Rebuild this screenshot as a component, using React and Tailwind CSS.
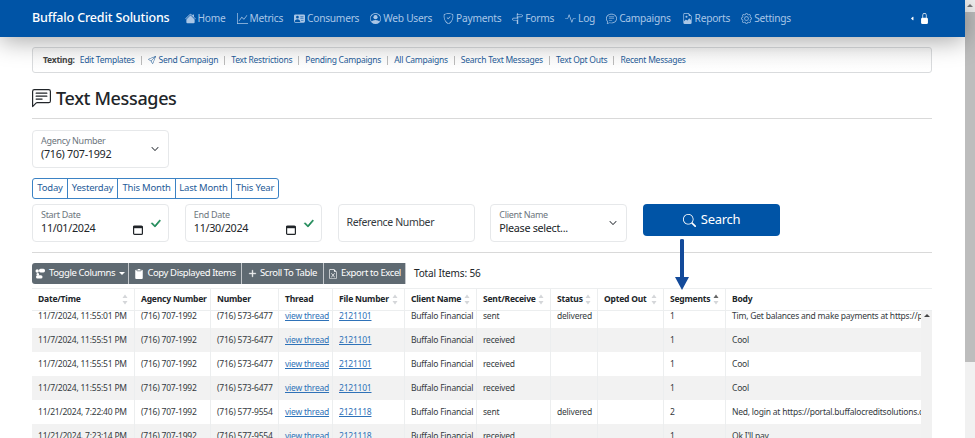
import React from "react";
import {
  BsHouseFill, BsGraphUp, BsPersonVcardFill, BsPersonCircle, BsShieldCheck, BsSignpostSplit,
  BsActivity, BsChatText, BsFileEarmarkImage, BsGear, BsCaretLeftFill, BsLockFill, BsSend,
  BsChatLeftText, BsChevronDown, BsCheckLg, BsSearch, BsClipboard2Fill,
  BsPlusLg, BsFileEarmarkExcel,
} from "react-icons/bs";

const font = { fontFamily: '"Noto Sans", "Open Sans", Arial, sans-serif' };

const nav = [
  [BsHouseFill, "Home"], [BsGraphUp, "Metrics"], [BsPersonVcardFill, "Consumers"], [BsPersonCircle, "Web Users"],
  [BsShieldCheck, "Payments"], [BsSignpostSplit, "Forms"], [BsActivity, "Log"], [BsChatText, "Campaigns"],
  [BsFileEarmarkImage, "Reports"], [BsGear, "Settings"],
];

const subnav = ["Edit Templates", "Send Campaign", "Text Restrictions", "Pending Campaigns", "All Campaigns", "Search Text Messages", "Text Opt Outs", "Recent Messages"];

const cols = [
  ["Date/Time", true, 103], ["Agency Number", false, 76], ["Number", false, 68], ["Thread", false, 54],
  ["File Number", true, 72], ["Client Name", true, 72], ["Sent/Receive", true, 74], ["Status", true, 47],
  ["Opted Out", true, 66], ["Segments", "up", 62], ["Body", false, 206],
];

const rows = [
  ["11/7/2024, 11:55:01 PM", "(716) 573-6477", "2121101", "sent", "delivered", "1", "Tim, Get balances and make payments at https://portal.buffalocreditsolutions.com"],
  ["11/7/2024, 11:55:51 PM", "(716) 573-6477", "2121101", "received", "", "1", "Cool"],
  ["11/7/2024, 11:55:51 PM", "(716) 573-6477", "2121101", "received", "", "1", "Cool"],
  ["11/7/2024, 11:55:51 PM", "(716) 573-6477", "2121101", "received", "", "1", "Cool"],
  ["11/21/2024, 7:22:40 PM", "(716) 577-9554", "2121118", "sent", "delivered", "2", "Ned, login at https://portal.buffalocreditsolutions.com/login"],
  ["11/21/2024, 7:23:14 PM", "(716) 577-9554", "2121118", "received", "", "1", "Ok I'll pay"],
];

function Sort({ up }) {
  return (
    <svg width="6" height="11" viewBox="0 0 6 11" className="shrink-0">
      <path d="M3 0.5 L5.5 4 H0.5 Z" fill={up ? "#666" : "#d4d6d9"} />
      <path d="M3 10.5 L5.5 7 H0.5 Z" fill="#d4d6d9" />
    </svg>
  );
}

function CalendarIcon() {
  return (
    <svg width="10" height="10" viewBox="0 0 10 10" className="absolute right-[25px] top-[20px]">
      <rect x="0.6" y="1" width="8.8" height="8.4" rx="1" fill="none" stroke="#212529" strokeWidth="1.2" />
      <rect x="0.6" y="1" width="8.8" height="2.2" fill="#212529" />
    </svg>
  );
}

function Field({ label, value, chevron, date, w }) {
  return (
    <div className={`relative h-[38px] rounded-[4px] border border-[#e6e8ea] bg-white pl-[8px] ${w}`}>
      <div className="pt-[3px] text-[9px] leading-[13px] tracking-[-0.3px] text-[#6c757d]">{label}</div>
      <div className="text-[10.8px] leading-[14px] tracking-[-0.3px] text-[#212529]">{value}</div>
      {chevron && <BsChevronDown className="absolute right-[9px] top-[14px] text-[#343a40]" size={8} strokeWidth={0.8} />}
      {date && <CalendarIcon />}
      {date && <BsCheckLg className="absolute right-[6px] top-[12px] text-[#198754]" size={13} strokeWidth={0.8} />}
    </div>
  );
}

function ToolButton({ icon, children, caret, w }) {
  return (
    <div className={`flex h-[21px] items-center justify-center gap-[3px] border-r border-r-[#c4c8cc] bg-[#5f6a72] text-[9.5px] tracking-[-0.4px] text-white last:border-r-0 first:rounded-l-[3px] last:rounded-r-[3px] ${w}`}>
      {icon}
      <span>{children}</span>
      {caret && <span className="ml-[1px] h-0 w-0 border-x-[3px] border-t-[3px] border-x-transparent border-t-white" />}
    </div>
  );
}

function ColumnsIcon() {
  return (
    <svg width="11" height="11" viewBox="0 0 11 11" fill="white">
      <circle cx="2.2" cy="3" r="1.7" />
      <rect x="4" y="0.8" width="6" height="3.6" rx="1.6" />
      <circle cx="2.8" cy="6.4" r="1.3" />
      <rect x="1" y="7.2" width="6.5" height="3.4" rx="1.6" />
    </svg>
  );
}

export default function App() {
  return (
    <div className="flex h-[438px] w-[975px] overflow-hidden bg-white" style={font}>
      <div className="relative min-w-0 flex-1">
        <header className="relative z-10 flex h-[37px] items-center bg-[#0054a6] pl-[32px] shadow-[0_4px_24px_rgba(0,0,0,0.35)]">
          <div className="mr-[15px] text-[12.5px] font-medium tracking-[-0.15px] text-white">Buffalo Credit Solutions</div>
          <div className="flex items-center gap-[11px] pt-px">
            {nav.map(([Icon, label]) => (
              <div key={label} className="flex items-center gap-[2px] text-[10.2px] tracking-[-0.25px] text-[#a9c6e6]">
                <Icon size={11} />
                <span>{label}</span>
              </div>
            ))}
          </div>
          <div className="ml-auto mr-[35px] flex items-center gap-[4px] text-white">
            <BsCaretLeftFill size={5} />
            <BsLockFill size={11} />
          </div>
        </header>

        <main className="px-[32px] pt-[10px]">
          <div className="flex h-[26px] w-[900px] items-center rounded-[3px] border border-[#d9dbdd] bg-gradient-to-b from-[#f7f7f7] to-white pl-[10px] text-[8.5px] tracking-[-0.25px]">
            <span className="mr-[5px] font-bold text-[#444]">Texting:</span>
            {subnav.map((s, i) => (
              <React.Fragment key={s}>
                {i > 0 && <span className="mx-[6px] h-[9px] w-px bg-[#bbb]" />}
                <span className="flex items-center gap-[3px] text-[#1f5c99]">
                  {s === "Send Campaign" && <BsSend size={8} />}
                  {s}
                </span>
              </React.Fragment>
            ))}
          </div>

          <div className="mt-[8px] flex h-[34px] w-[900px] items-center gap-[5px]">
            <BsChatLeftText size={19} className="text-[#212529]" />
            <h1 className="text-[18px] font-medium tracking-[-0.35px] text-[#212529]">Text Messages</h1>
          </div>
          <div className="mt-[3px] h-px w-[900px] bg-[#d9d9d9]" />

          <div className="mt-[11px]">
            <Field label="Agency Number" value="(716) 707-1992" chevron w="w-[137px]" />
          </div>

          <div className="mt-[10px] flex h-[21px] w-fit rounded-[3px] border border-[#3b82c4] text-[9.5px] tracking-[-0.2px] text-[#1f5c99]">
            {[["Today", "w-[34px]"], ["Yesterday", "w-[50px]"], ["This Month", "w-[58px]"], ["Last Month", "w-[56px]"], ["This Year", "w-[47px]"]].map(([t, w], i) => (
              <div key={t} className={`flex items-center justify-center ${w} ${i ? "border-l border-[#3b82c4]" : ""}`}>{t}</div>
            ))}
          </div>

          <div className="mt-[5px] flex items-start gap-[15.75px]">
            <Field label="Start Date" value="11/01/2024" date w="w-[137px]" />
            <Field label="End Date" value="11/30/2024" date w="w-[137px]" />
            <div className="flex h-[38px] w-[137px] items-center rounded-[4px] border border-[#e6e8ea] pl-[8px] text-[10.5px] tracking-[-0.35px] text-[#343a40]">Reference Number</div>
            <Field label="Client Name" value="Please select..." chevron w="w-[137px]" />
            <div className="flex h-[32px] w-[137px] items-center justify-center gap-[5px] rounded-[4px] bg-[#0054a6] text-[13px] tracking-[-0.3px] text-white">
              <BsSearch size={13} />
              <span>Search</span>
            </div>
          </div>

          <div className="mt-[10px] h-px w-[900px] bg-[#d9d9d9]" />

          <div className="mt-[10px] flex items-center">
            <ToolButton icon={<ColumnsIcon />} caret w="w-[97px]">Toggle Columns</ToolButton>
            <ToolButton icon={<BsClipboard2Fill size={10} />} w="w-[113px]">Copy Displayed Items</ToolButton>
            <ToolButton icon={<BsPlusLg size={9} strokeWidth={1} />} w="w-[82px]">Scroll To Table</ToolButton>
            <ToolButton icon={<BsFileEarmarkExcel size={10} />} w="w-[82px]">Export to Excel</ToolButton>
            <span className="ml-[8px] text-[10px] tracking-[-0.15px] text-[#212529]">Total Items: 56</span>
          </div>

          <div className="mt-[4px] w-[900px]">
            <div className="flex h-[23px] border-y border-[#eceeef] bg-white">
              {cols.map(([name, sort, w]) => (
                <div key={name} style={{ width: w }} className="flex shrink-0 items-center justify-between border-r border-[#eceeef] px-[6px] text-[8.5px] font-bold tracking-[-0.2px] text-[#212529] last:border-r-0">
                  <span className="whitespace-nowrap">{name}</span>
                  {sort && <Sort up={sort === "up"} />}
                </div>
              ))}
            </div>
            <div className="relative h-[127px] overflow-hidden">
              <div className="-mt-[7px]">
                {rows.map((r, i) => (
                  <div key={i} className={`flex h-[24px] items-center text-[8.5px] tracking-[-0.22px] text-[#343a40] ${i % 2 ? "bg-[#f2f2f2]" : "bg-white"}`}>
                    {[r[0], "(716) 707-1992", r[1], "view thread", r[2], "Buffalo Financial", r[3], r[4], "", r[5], r[6]].map((c, j) => (
                      <div key={j} style={{ width: cols[j][2] }} className={`flex h-full shrink-0 items-center overflow-hidden whitespace-nowrap border-r border-[#eceeef] px-[6px] last:border-r-0 ${j === 3 || j === 4 ? "text-[#2f72b8] underline" : ""}`}>{c}</div>
                    ))}
                  </div>
                ))}
              </div>
              <div className="absolute right-0 top-0 flex h-full w-[11px] justify-center bg-[#f1f1f1] pt-[3px]">
                <span className="h-0 w-0 border-x-[3px] border-b-[3px] border-x-transparent border-b-[#444]" />
              </div>
            </div>
          </div>
        </main>

        <div className="absolute left-[675px] top-[239px] z-10">
          <svg width="14" height="51" viewBox="0 0 14 51">
            <path d="M5 1 Q5 0 7 0 Q9 0 9 1 V38 H14 L7 51 L0 38 H5 Z" fill="#134a9a" />
          </svg>
        </div>
      </div>

      <div className="flex h-full w-[10px] shrink-0 flex-col items-center bg-[#f1f1f1]">
        <span className="mt-[4px] h-0 w-0 border-x-[3px] border-b-[3px] border-x-transparent border-b-[#777]" />
        <div className="mt-[5px] h-[350px] w-full bg-[#bdbdbd]" />
      </div>
    </div>
  );
}
